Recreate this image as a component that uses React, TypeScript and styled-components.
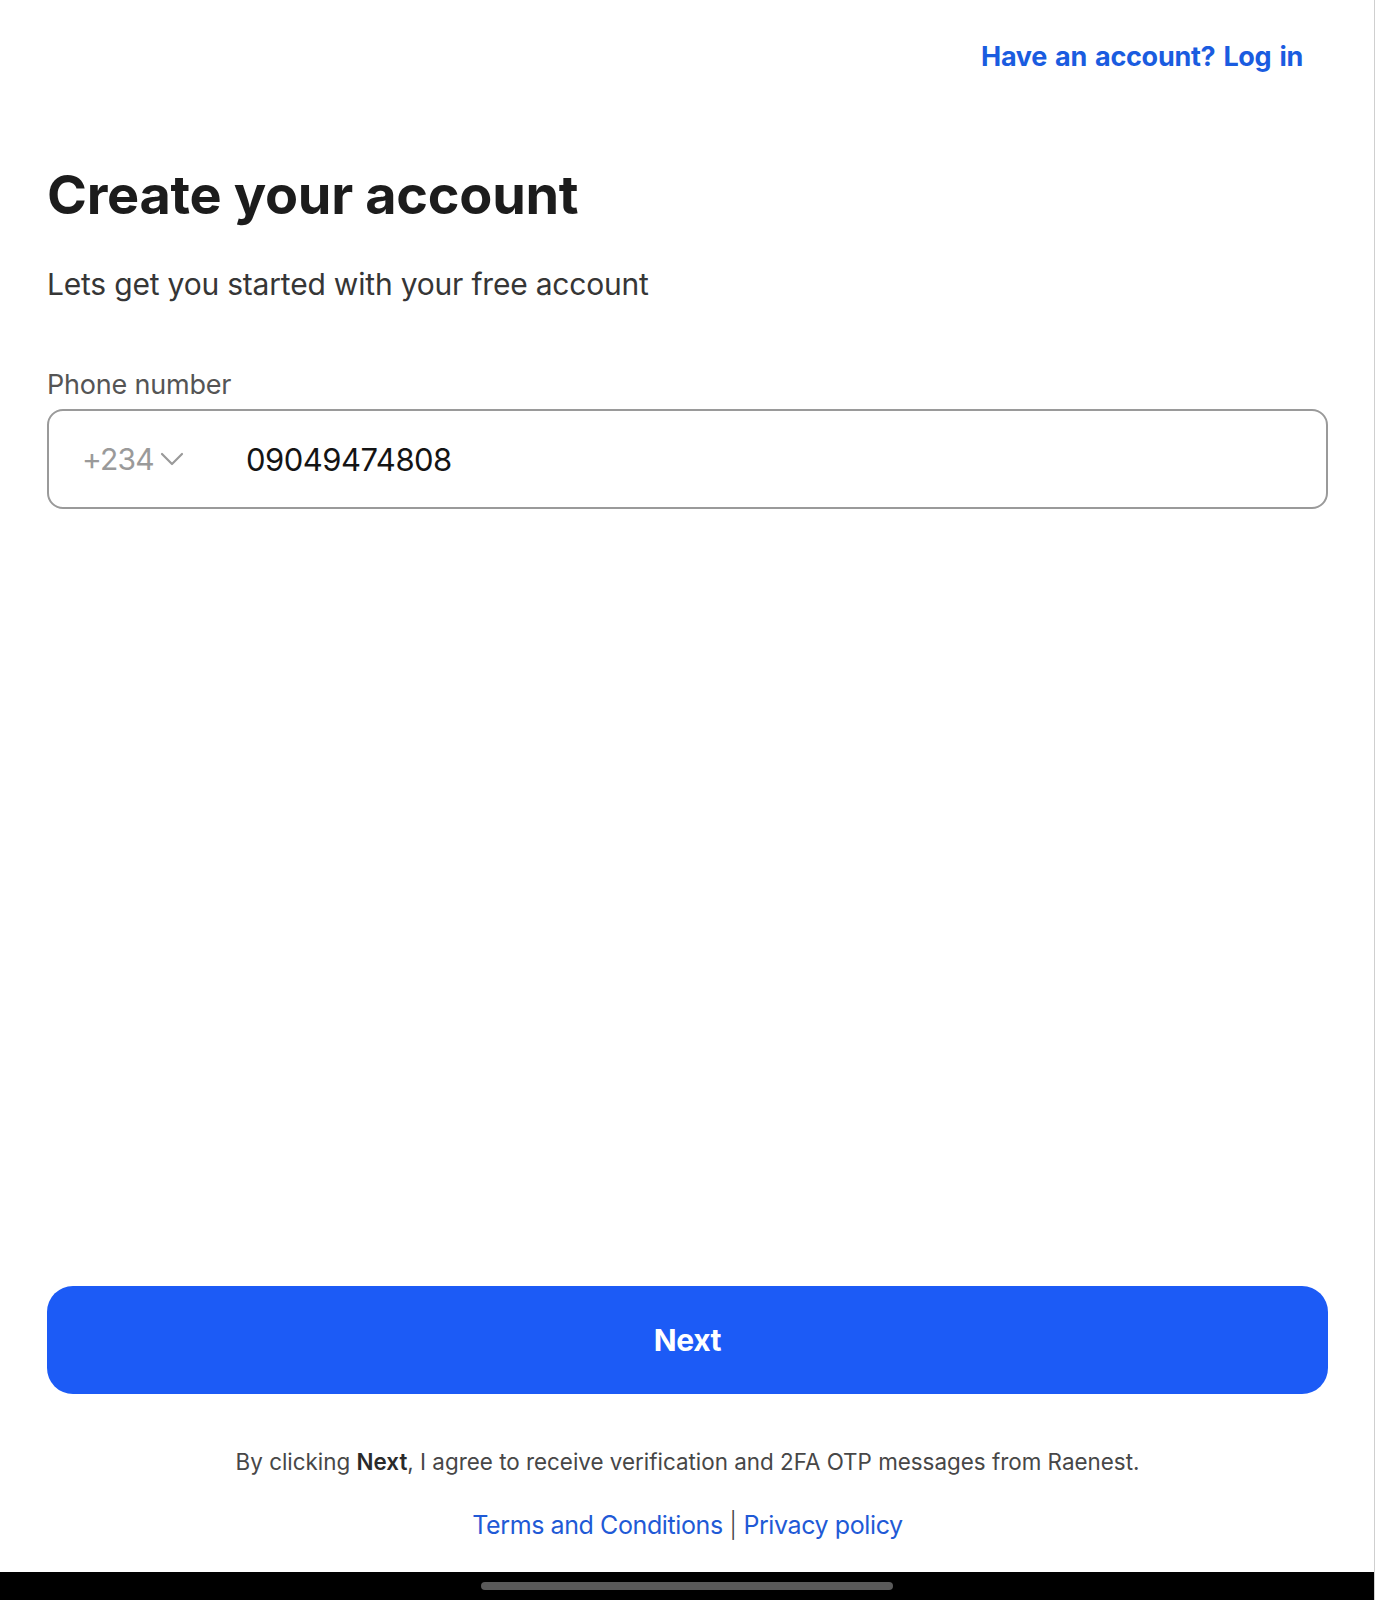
import React, { useState } from "react";
import styled, { createGlobalStyle } from "styled-components";

const GlobalStyle = createGlobalStyle`
  html, body {
    margin: 0;
    padding: 0;
    background: #ffffff;
  }
  * {
    box-sizing: border-box;
  }
`;

const Screen = styled.div`
  width: 1375px;
  height: 1600px;
  display: flex;
  flex-direction: column;
  background: #ffffff;
  border-right: 1px solid #cfcfcf;
  font-family: "Inter", "Noto Sans", sans-serif;
`;

const Content = styled.main`
  flex: 1;
  display: flex;
  flex-direction: column;
  padding: 0 46px 0 47px;
`;

const TopBar = styled.div`
  display: flex;
  justify-content: flex-end;
  padding: 40px 25px 0 0;
  height: 102px;
`;

const LoginLink = styled.a`
  font-size: 27px;
  font-weight: 700;
  letter-spacing: -0.3px;
  word-spacing: 2px;
  color: #1a5ce0;
  text-decoration: none;
`;

const Title = styled.h1`
  margin: 60px 0 0;
  font-size: 54px;
  line-height: 66px;
  font-weight: 700;
  letter-spacing: -0.3px;
  color: #1c1c1c;
`;

const Subtitle = styled.p`
  margin: 36px 0 0;
  font-size: 30px;
  line-height: 40px;
  font-weight: 400;
  letter-spacing: -0.2px;
  color: #363636;
`;

const Label = styled.label`
  display: block;
  margin: 63px 0 0;
  font-size: 27px;
  line-height: 36px;
  letter-spacing: -0.2px;
  color: #555555;
`;

const PhoneField = styled.div`
  margin-top: 6px;
  height: 100px;
  display: flex;
  align-items: center;
  border: 2px solid #9a9a9a;
  border-radius: 16px;
  padding: 0 0 0 33px;
`;

const CountryCode = styled.button`
  display: flex;
  align-items: center;
  gap: 6px;
  width: 164px;
  padding: 0;
  background: none;
  border: none;
  font-family: inherit;
  font-size: 30px;
  letter-spacing: -0.8px;
  color: #9a9a9a;
`;

const PhoneInput = styled.input`
  flex: 1;
  height: 100%;
  padding: 0;
  border: none;
  outline: none;
  background: none;
  font-family: inherit;
  font-size: 31px;
  letter-spacing: -0.5px;
  color: #141414;
`;

const Spacer = styled.div`
  flex: 1;
`;

const NextButton = styled.button`
  width: 100%;
  height: 108px;
  border: none;
  border-radius: 26px;
  background: #1c5bf6;
  color: #ffffff;
  font-family: inherit;
  font-size: 30px;
  font-weight: 700;
  letter-spacing: -0.4px;
`;

const Consent = styled.p`
  margin: 53px 0 0;
  text-align: center;
  font-size: 22.4px;
  line-height: 30px;
  letter-spacing: 0;
  color: #474747;

  strong {
    font-weight: 600;
    color: #2a2a2a;
  }
`;

const Links = styled.p`
  margin: 32px 0 31px;
  text-align: center;
  font-size: 25px;
  line-height: 32px;
  letter-spacing: -0.4px;
  color: #333333;
`;

const Divider = styled.span`
  font-weight: 300;
  color: #444444;
`;

const TextLink = styled.a`
  color: #1f5ad6;
  text-decoration: none;
`;

const NavBar = styled.div`
  height: 28px;
  background: #000000;
  display: flex;
  justify-content: center;
  align-items: center;
`;

const HomeIndicator = styled.div`
  width: 412px;
  height: 8px;
  border-radius: 4px;
  background: #5a5a5a;
`;

function Chevron() {
  return (
    <svg width="24" height="14" viewBox="0 0 24 14" fill="none">
      <path d="M2 2l10 10 10-10" stroke="#9a9a9a" strokeWidth="2.2" strokeLinecap="round" strokeLinejoin="round" />
    </svg>
  );
}

export default function App() {
  const [phone, setPhone] = useState("09049474808");
  return (
    <>
      <GlobalStyle />
      <Screen>
        <Content>
          <TopBar>
            <LoginLink href="#">Have an account? Log in</LoginLink>
          </TopBar>
          <Title>Create your account</Title>
          <Subtitle>Lets get you started with your free account</Subtitle>
          <Label htmlFor="phone">Phone number</Label>
          <PhoneField>
            <CountryCode type="button">
              +234 <Chevron />
            </CountryCode>
            <PhoneInput id="phone" type="tel" value={phone} onChange={(e) => setPhone(e.currentTarget.value)} />
          </PhoneField>
          <Spacer />
          <NextButton type="button">Next</NextButton>
          <Consent>
            By clicking <strong>Next</strong>, I agree to receive verification and 2FA OTP messages from Raenest.
          </Consent>
          <Links>
            <TextLink href="#">Terms and Conditions</TextLink> <Divider>|</Divider>{" "}
            <TextLink href="#">Privacy policy</TextLink>
          </Links>
        </Content>
        <NavBar>
          <HomeIndicator />
        </NavBar>
      </Screen>
    </>
  );
}
